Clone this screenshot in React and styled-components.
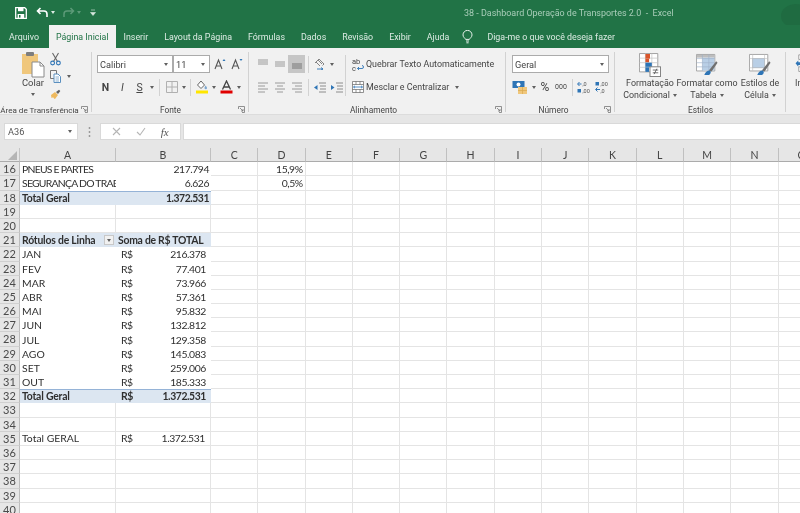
import React from 'react';
import styled, { createGlobalStyle } from 'styled-components';

const Global = createGlobalStyle`
  html, body { margin: 0; padding: 0; width: 800px; height: 513px; overflow: hidden; background: #fff; }
  #root { width: 800px; height: 513px; overflow: hidden; }
  * { box-sizing: border-box; }
`;

const UI = 'Roboto, "Noto Sans", sans-serif';
const GREEN = '#217346';

const Page = styled.div`
  width: 800px; height: 513px; overflow: hidden; display: flex; flex-direction: column;
  font-family: ${UI}; filter: blur(0.3px);
`;
const TitleBar = styled.header`
  height: 25px; flex: none; background: ${GREEN}; display: flex; align-items: center; position: relative; overflow: hidden;
`;
const Quick = styled.div`
  width: 464px; flex: none; display: flex; align-items: center; padding-left: 15px; gap: 0;
`;
const QuickSlot = styled.span`
  width: ${p => p.$w}px; margin-left: ${p => p.$ml || 0}px; display: flex; align-items: center; justify-content: center; flex: none;
`;
const TitleText = styled.div`
  font-size: 8.95px; color: #a9cdb9; white-space: pre; letter-spacing: 0;
`;
const Backdrop = styled.svg`
  position: absolute; right: 0; top: 0;
`;
const TabBar = styled.nav`
  height: 23px; flex: none; background: ${GREEN}; display: flex; align-items: stretch; padding-left: 1px;
`;
const Tab = styled.div`
  padding: 0 8px; margin-left: ${p => p.$ml || 0}px; font-size: 8.85px; color: #dcebe3; display: flex; align-items: center; white-space: nowrap;
  ${p => p.$active ? `background:#f1f1f1;color:${GREEN};padding:0 7px;` : ''}
`;
const TellMe = styled.div`
  margin-left: 5px; display: flex; align-items: center; gap: 14px; color: #dcebe3; font-size: 8.85px; white-space: nowrap;
`;
const Ribbon = styled.section`
  height: 67px; flex: none; background: #f1f1f1; display: flex; border-bottom: 1px solid #dcdcdc;
`;
const Group = styled.div`
  width: ${p => p.$w}px; flex: none; display: flex; flex-direction: column; position: relative;
  &::after { content: ''; position: absolute; right: 0; top: 4px; bottom: 2px; width: 1px; background: #d2d2d2; }
  ${p => p.$open ? '&::after{display:none;}' : ''}
`;
const GroupBody = styled.div`
  height: 58px; flex: none; display: flex; padding-left: ${p => p.$pl || 0}px; padding-top: ${p => p.$pt ?? 7}px;
`;
const GroupLabel = styled.div`
  font-size: ${p => p.$fs || 8.4}px; line-height: 8px; color: #444; text-align: center; white-space: nowrap; padding-right: ${p => p.$pr || 0}px;
`;
const Launcher = styled.svg`
  position: absolute; right: 4px; bottom: 1px;
`;
const PasteCol = styled.div`
  width: 28px; display: flex; flex-direction: column; align-items: center; margin-top: -4px; font-size: 9.4px; color: #444;
`;
const PasteText = styled.span` line-height: 10px; `;
const SmallCol = styled.div`
  display: flex; flex-direction: column; margin-left: 3px; margin-top: -5px; gap: 1px;
`;
const SmallRow = styled.div`
  height: 17px; display: flex; align-items: center; gap: 3px;
`;
const Stack = styled.div`
  display: flex; flex-direction: column; gap: 5px;
`;
const Row = styled.div`
  height: 18px; display: flex; align-items: center;
`;
const Slot = styled.span`
  width: ${p => p.$w || 17}px; height: 18px; flex: none; display: flex; align-items: center; justify-content: center;
  margin-left: ${p => p.$ml || 0}px;
  font-size: ${p => p.$fs || 11}px; color: ${p => p.$c || '#444'};
  font-weight: ${p => p.$bold ? 700 : 400}; font-style: ${p => p.$it ? 'italic' : 'normal'};
  text-decoration: ${p => p.$ul ? 'underline' : 'none'};
  background: ${p => p.$on ? '#c6c6c6' : 'transparent'};
`;
const Caret = styled.i`
  display: block; flex: none; width: 0; height: 0; margin: ${p => p.$m || '0'};
  border-left: 2.5px solid transparent; border-right: 2.5px solid transparent; border-top: 3px solid ${p => p.$c || '#606060'};
`;
const Sep = styled.span`
  width: 1px; height: 17px; background: #d2d2d2; flex: none; margin: 0 ${p => p.$m || 3}px;
`;
const Select = styled.div`
  width: ${p => p.$w}px; height: 18px; flex: none; background: #fff; border: 1px solid #ababab;
  display: flex; align-items: center; justify-content: space-between; padding: 0 4px 0 2px; font-size: 9.2px; color: #444;
`;
const SubA = styled.div`
  width: 97px; flex: none; display: flex; flex-direction: column; gap: 5px; position: relative; padding-left: 5px;
  border-right: 1px solid #d2d2d2; height: 41px;
`;
const SubB = styled.div`
  display: flex; flex-direction: column; gap: 5px; padding-left: 4px;
`;
const WideBtn = styled.div`
  height: 18px; display: flex; align-items: center; gap: 1px; font-size: 8.9px; color: #444; white-space: nowrap;
`;
const BigBtn = styled.div`
  width: ${p => p.$w}px; flex: none; display: flex; flex-direction: column; align-items: ${p => p.$start ? 'flex-start' : 'center'}; font-size: 8.9px; color: #444; white-space: nowrap;
`;
const BigIcon = styled.div` height: 26px; display:flex; align-items:flex-end; `;
const BigLine = styled.div` line-height: 12px; display: flex; align-items: center; gap: 3px; `;

const FormulaBar = styled.div`
  height: 33px; flex: none; background: #e6e6e6; display: flex; align-items: flex-start; padding: 8px 0 0 4px;
`;
const NameBox = styled.div`
  width: 74px; height: 17px; background: #fff; border: 1px solid #d9d9d9; display: flex; align-items: center; justify-content: space-between;
  padding: 0 5px 0 3px; font-size: 9.2px; color: #555; flex: none;
`;
const Dots = styled.div`
  width: 22px; height: 17px; flex: none; display: flex; align-items: center; justify-content: center;
`;
const FxBox = styled.div`
  width: 81px; height: 17px; flex: none; background: #fff; border: 1px solid #d9d9d9; display: flex; align-items: center; justify-content: space-around; padding: 0 4px;
`;
const FxMark = styled.span`
  font-family: "Liberation Serif", serif; font-style: italic; font-size: 11px; color: #555;
`;
const FormulaInput = styled.div`
  flex: 1; height: 17px; margin-left: 2px; background: #fff; border: 1px solid #d9d9d9; border-right: 0;
`;

const Sheet = styled.div`
  display: grid; grid-template-columns: 20px 96px 95px repeat(13, 47.3px); grid-auto-rows: 14.2px;
  font-family: Lato, "Liberation Sans", sans-serif; font-size: 10.4px; color: #2f2f2f; background: #fff; flex: none; width: 820px;
`;
const Corner = styled.div`
  background: #e6e6e6; border-right: 1px solid #c4c4c4; border-bottom: 1px solid #ababab; display: flex; align-items: flex-end; justify-content: flex-end; padding: 0 2px 1px 0;
`;
const ColHead = styled.div`
  background: #e6e6e6; border-right: 1px solid #c0c0c0; border-bottom: 1px solid #ababab; text-align: center; font-size: 10.5px; line-height: 14px; color: #444;
`;
const RowHead = styled.div`
  background: #e6e6e6; border-right: 1px solid #bdbdbd; border-bottom: 1px solid #d0d0d0; text-align: center; font-size: 11px; line-height: 14px; color: #4a4a4a;
`;
const Cell = styled.div`
  display: flex; align-items: center; overflow: hidden; white-space: nowrap; min-width: 0; line-height: 14px;
  padding: 0 ${p => p.$pr ?? 2}px 0 ${p => p.$pl ?? 2}px;
  justify-content: ${p => p.$align === 'right' ? 'flex-end' : p.$align === 'between' ? 'space-between' : 'flex-start'};
  font-weight: ${p => p.$bold ? 700 : 400};
  letter-spacing: ${p => p.$ls || 0}px;
  background: ${p => p.$blue ? '#dce6f1' : '#fff'};
  border-right: ${p => p.$plain ? '0' : '1px solid #e4e4e4'};
  border-bottom: ${p => p.$plain ? '0' : '1px solid #e4e4e4'};
  ${p => p.$topLine ? 'box-shadow: inset 0 1px 0 #95b3d7;' : ''}
`;
const FilterBtn = styled.span`
  width: 10px; height: 10px; background: #f1f1f1; border: 1px solid #c8c8c8; display: flex; align-items: center; justify-content: center; flex: none;
`;

/* ---------- icons ---------- */
const Save = () => (
  <svg width="12" height="12" viewBox="0 0 12 12"><path d="M.7.7h9l1.6 1.6v9H.7z" fill="none" stroke="#fff" strokeWidth="1.3"/><rect x="3" y="1" width="5.5" height="3.2" fill="#fff"/><rect x="2.6" y="7" width="6.6" height="4" fill="#fff"/><rect x="4" y="8" width="1.5" height="2.6" fill={GREEN}/></svg>
);
const Undo = ({ c = '#fff' }) => (
  <svg width="13" height="11" viewBox="0 0 13 11"><path d="M4.5 1 1.5 4l3 3M1.8 4h6.2a3 3 0 0 1 3 3v3" fill="none" stroke={c} strokeWidth="1.6"/></svg>
);
const Redo = () => (
  <svg width="13" height="11" viewBox="0 0 13 11"><path d="M8.5 1l3 3-3 3M11.2 4H5a3 3 0 0 0-3 3v3" fill="none" stroke="#5c9a78" strokeWidth="1.5"/></svg>
);
const QuickMore = () => (
  <svg width="6" height="7" viewBox="0 0 6 7"><path d="M1 1h4M.5 3.5h5l-2.5 3z" fill="#d9e8df" stroke="#d9e8df" strokeWidth=".6"/></svg>
);
const Bulb = () => (
  <svg width="11" height="14" viewBox="0 0 11 14"><path d="M3.6 9.4C3 8 1 7.2 1 4.9a4.5 4.5 0 0 1 9 0c0 2.3-2 3.1-2.6 4.5zM4 11h3M4.4 12.8h2.2" fill="none" stroke="#e9f3ed" strokeWidth="1"/></svg>
);
const LaunchIcon = () => (
  <Launcher width="7" height="7" viewBox="0 0 7 7"><path d="M.5 3V.5H6.5V6.5H4M2 2l3 3M5 3v2H3" fill="none" stroke="#777" strokeWidth=".8"/></Launcher>
);
const PasteIcon = () => (
  <svg width="24" height="27" viewBox="0 0 24 27"><rect x="1" y="3" width="16" height="20" fill="#f0c77c"/><rect x="5" y="1" width="8" height="4" rx="1" fill="#7e7e7e"/><path d="M11 11h8l4 4v11H11z" fill="#fff" stroke="#8a8a8a"/><path d="M19 11v4h4" fill="none" stroke="#8a8a8a"/></svg>
);
const Scissors = () => (
  <svg width="11" height="14" viewBox="0 0 11 14"><path d="M2.5 1 7.5 9.5M8.5 1 3.5 9.5" stroke="#666" strokeWidth="1.1"/><circle cx="2.6" cy="11" r="1.9" fill="none" stroke="#2e75b6" strokeWidth="1.1"/><circle cx="8.4" cy="11" r="1.9" fill="none" stroke="#2e75b6" strokeWidth="1.1"/></svg>
);
const CopyIcon = () => (
  <svg width="11" height="13" viewBox="0 0 11 13"><path d="M.5.5h6v8h-6z" fill="#f4f4f4" stroke="#777"/><path d="M4 4h4l2.5 2.5V12.5H4z" fill="#fff" stroke="#5a8fbf"/><path d="M5.5 7h3.5M5.5 9h3.5M5.5 11h3.5" stroke="#5a8fbf" strokeWidth=".7"/></svg>
);
const Brush = () => (
  <svg width="11" height="11" viewBox="0 0 11 11"><path d="M1 6 5 3l3 3-3 4c-1-.3-1.5-1-1.8-1.8L1.5 9z" fill="#eeb95e"/><path d="M6 3 9 .7l1.3 1.3L8 5z" fill="#606060"/></svg>
);
const GrowA = ({ down }) => (
  <svg width="12" height="12" viewBox="0 0 12 12"><path d="M1 11 4.5 2 8 11M2.3 8h4.4" fill="none" stroke="#555" strokeWidth="1.1"/><path d={down ? 'M8.5 1l1.5 2 1.5-2z' : 'M8.5 3l1.5-2 1.5 2z'} fill="#2e75b6"/></svg>
);
const Borders = () => (
  <svg width="12" height="12" viewBox="0 0 12 12"><path d="M.5.5h11v11H.5zM6 .5v11M.5 6h11" fill="none" stroke="#b0b0b0"/></svg>
);
const Fill = () => (
  <svg width="14" height="14" viewBox="0 0 14 14"><path d="M6 1 2.5 5 6 8.500 9.500 5z" fill="#fff" stroke="#666"/><path d="M10.500 5.500c1 1.200 1.500 1.800 1.500 2.500a1.200 1.200 0 0 1-2.500 0c0-.7.500-1.300 1-2.500z" fill="#7fa8d0"/><rect x="1" y="10.500" width="12" height="3" fill="#ffe600"/></svg>
);
const FontColor = () => (
  <svg width="13" height="14" viewBox="0 0 13 14"><path d="M2.500 9.500 6.500 1l4 8.500M4 7h5" fill="none" stroke="#444" strokeWidth="1.3"/><rect x="0.500" y="10.500" width="12" height="3" fill="#e00000"/></svg>
);
const Lines = ({ ys, x = [[1, 11]], c = '#9a9a9a' }) => (
  <svg width="12" height="12" viewBox="0 0 12 12">
    {ys.map((y, i) => { const s = x[i % x.length]; return <path key={i} d={`M${s[0]} ${y}H${s[1]}`} stroke={c} strokeWidth="1"/>; })}
  </svg>
);
const Orient = () => (
  <svg width="13" height="12" viewBox="0 0 13 12"><path d="M2 5 6 1l5 5-1.500 1.500M3 4l4 4M5 2l4 4" fill="none" stroke="#777" strokeWidth=".9"/><path d="M4 11h6M8 9.500 10 11l-2 1" fill="none" stroke="#2e75b6" strokeWidth=".9"/></svg>
);
const Indent = ({ flip }) => (
  <svg width="12" height="11" viewBox="0 0 12 11"><path d="M5 1h7M6 4h6M6 7h6M5 10h7M0 1h0" stroke="#8c8c8c"/><path d={flip ? 'M0 3l3.500 2.500L0 8z' : 'M3.500 3 0 5.500 3.500 8z'} fill="#2e75b6"/></svg>
);
const WrapIcon = () => (
  <svg width="12" height="14" viewBox="0 0 12 14"><text x="0" y="6.500" fontSize="7.500" fill="#444" fontFamily="Roboto">ab</text><text x="0" y="13.500" fontSize="7.500" fill="#444" fontFamily="Roboto">c</text><path d="M5.500 11.500H10q1.500 0 1.500-1.500T10 8.500M7 10l-1.500 1.500L7 13" fill="none" stroke="#2e75b6" strokeWidth=".9"/></svg>
);
const MergeIcon = () => (
  <svg width="12" height="12" viewBox="0 0 12 12"><path d="M.5.5h11v11H.5zM.5 3.500h11M.5 8.500h11M4 .5v3M8 .5v3M4 8.500v3M8 8.500v3" fill="#fff" stroke="#666" strokeWidth=".7"/><path d="M1.500 6h9M3 4.800 1.500 6 3 7.200M9 4.800 10.500 6 9 7.200" fill="none" stroke="#2e75b6" strokeWidth=".8"/></svg>
);
const Currency = () => (
  <svg width="17" height="15" viewBox="0 0 17 15"><rect x="0.500" y="1" width="12" height="7" fill="#2e75b6"/><circle cx="6.500" cy="4.500" r="2" fill="#fff"/><rect x="6" y="7" width="9" height="7" fill="#f0c77c"/><path d="M6 10.500h9M10.500 7v7" stroke="#d9a94f" strokeWidth=".7"/></svg>
);
const Decimal = ({ flip }) => (
  <svg width="14" height="14" viewBox="0 0 14 14">
    <text x="5.500" y="6" fontSize="5.500" fill="#555" fontFamily="Roboto">{flip ? ',00' : ',0'}</text>
    <text x="5.500" y="13" fontSize="5.500" fill="#555" fontFamily="Roboto">{flip ? ',0' : ',00'}</text>
    <path d={flip ? 'M5 9.500H1M2.500 7.500l-2 2 2 2' : 'M4.500 4H1M2.500 2 .5 4l2 2'} fill="none" stroke="#2e75b6" strokeWidth="1"/>
    <rect x="0.500" y={flip ? 2 : 9} width="3.500" height="3.500" fill="#2e75b6"/>
  </svg>
);
const CondIcon = () => (
  <svg width="22" height="24" viewBox="0 0 24 26">
    <path d="M.5.500h20v20H.5z" fill="#fff" stroke="#9a9a9a"/>
    <path d="M7 .5v20M14 .5v20M.5 5.500h20M.5 10.500h20M.5 15.500h20" stroke="#c4c4c4" strokeWidth=".8"/>
    <rect x="7" y="1" width="5" height="5" fill="#d9552a"/><rect x="7" y="6" width="4" height="4" fill="#d9552a"/>
    <rect x="7" y="10.500" width="7" height="4.500" fill="#2e75b6"/><rect x="7" y="15.500" width="4" height="5" fill="#2e75b6"/>
    <rect x="12" y="15" width="11.500" height="10.500" fill="#fff" stroke="#7a7a7a"/>
    <path d="M15 18.500h6M15 21.500h6M19.500 17l-3 6" stroke="#444" strokeWidth=".8" fill="none"/>
  </svg>
);
const TableIcon = () => (
  <svg width="22" height="24" viewBox="0 0 24 26">
    <path d="M.5 1.500h20v18H.5z" fill="#fff" stroke="#a0a0a0"/>
    <rect x="1" y="2" width="19" height="3" fill="#bdbdbd"/>
    <rect x="7" y="5" width="13" height="14" fill="#b9cfe6"/>
    <path d="M7 1.500v18M14 1.500v18M.5 6h20M.5 10.500h20M.5 15h20" stroke="#9fb3c8" strokeWidth=".7"/>
    <path d="M14 19 22 9l1.500 1.500L17 20z" fill="#707070"/>
    <path d="M9 24c1-3 3-5 6-5 2 1 1 4-1 5z" fill="#2e75b6"/>
  </svg>
);
const CellStyleIcon = () => (
  <svg width="22" height="24" viewBox="0 0 24 26">
    <path d="M.5 1.500h20v18H.5z" fill="#fff" stroke="#a0a0a0"/>
    <rect x="4" y="6" width="13" height="10" fill="#b9cfe6" stroke="#8fa8c2" strokeWidth=".6"/>
    <path d="M.5 6h20M4 1.500v18M17 1.500v18M.5 16h20" stroke="#c0c0c0" strokeWidth=".7"/>
    <path d="M14 19 22 9l1.500 1.500L17 20z" fill="#707070"/>
    <path d="M9 24c1-3 3-5 6-5 2 1 1 4-1 5z" fill="#2e75b6"/>
  </svg>
);
const InsertIcon = () => (
  <svg width="14" height="24" viewBox="0 0 14 26"><path d="M3.500 2h10v5h-10zM3.500 15h10v5h-10z" fill="#fff" stroke="#9a9a9a"/><path d="M0 11 3 8v2h10v3H3v2z" fill="#2e75b6"/></svg>
);
const XMark = () => <svg width="9" height="9" viewBox="0 0 9 9"><path d="M1 1l7 7M8 1 1 8" stroke="#b5b5b5" strokeWidth="1.100"/></svg>;
const Check = () => <svg width="10" height="9" viewBox="0 0 10 9"><path d="M1 5l3 3 5-7" fill="none" stroke="#b5b5b5" strokeWidth="1.100"/></svg>;
const Grip = () => <svg width="3" height="10" viewBox="0 0 3 10"><path d="M1.500 0v2M1.500 4v2M1.500 8v2" stroke="#9a9a9a" strokeWidth="1.500"/></svg>;
const CornerMark = () => <svg width="9" height="9" viewBox="0 0 9 9"><path d="M9 0v9H0z" fill="#b5b5b5"/></svg>;

/* ---------- sheet data ---------- */
const COLS = ['A','B','C','D','E','F','G','H','I','J','K','L','M','N','O'];
const MONTHS = {
  22:['JAN','216.378'],23:['FEV','77.401'],24:['MAR','73.966'],25:['ABR','57.361'],26:['MAI','95.832'],
  27:['JUN','132.812'],28:['JUL','129.358'],29:['AGO','145.083'],30:['SET','259.006'],31:['OUT','185.333'],
};
const Money = ({ v }) => (<><span>R$</span><span>{v}</span></>);
const moneyProps = { $align: 'between', $pl: 5, $pr: 5, $ls: -0.4 };
const CAPS_LS = -0.75;
const NUM_LS = -0.45;

function rowCells(r) {
  if (r === 16 || r === 17) {
    const data = r === 16 ? ['PNEUS E PARTES','217.794'] : ['SEGURANÇA DO TRABALHO','6.626'];
    return [<Cell key="a" $plain $ls={CAPS_LS}>{data[0]}</Cell>, <Cell key="b" $plain $align="right" $ls={NUM_LS}>{data[1]}</Cell>];
  }
  if (r === 18) return [<Cell key="a" $plain $blue $bold $topLine $ls={-0.2}>Total Geral</Cell>, <Cell key="b" $plain $blue $bold $topLine $align="right" $ls={NUM_LS}>1.372.531</Cell>];
  if (r === 21) return [
    <Cell key="a" $plain $blue $bold $align="between" $ls={-0.2}>Rótulos de Linha<FilterBtn><Caret /></FilterBtn></Cell>,
    <Cell key="b" $plain $blue $bold $ls={-0.25}>Soma de R$ TOTAL</Cell>,
  ];
  if (MONTHS[r]) return [<Cell key="a" $plain>{MONTHS[r][0]}</Cell>, <Cell key="b" $plain {...moneyProps}><Money v={MONTHS[r][1]}/></Cell>];
  if (r === 32) return [<Cell key="a" $plain $blue $bold $topLine $ls={-0.2}>Total Geral</Cell>, <Cell key="b" $plain $blue $bold $topLine {...moneyProps}><Money v="1.372.531"/></Cell>];
  if (r === 35) return [<Cell key="a">Total GERAL</Cell>, <Cell key="b" {...moneyProps}><Money v="1.372.531"/></Cell>];
  return [<Cell key="a"/>, <Cell key="b"/>];
}
const PCT = { 16: '15,9%', 17: '0,5%' };
const ROWS = Array.from({ length: 25 }, (_, i) => 16 + i);

export default function App() {
  return (
    <Page>
      <Global />
      <TitleBar>
        <Quick>
          <QuickSlot $w={12}><Save /></QuickSlot>
          <QuickSlot $w={14} $ml={8}><Undo /></QuickSlot>
          <QuickSlot $w={8}><Caret $c="#dcebe3" /></QuickSlot>
          <QuickSlot $w={14} $ml={4}><Redo /></QuickSlot>
          <QuickSlot $w={8}><Caret $c="#5c9a78" /></QuickSlot>
          <QuickSlot $w={20}><QuickMore /></QuickSlot>
        </Quick>
        <TitleText>38 - Dashboard Operação de Transportes 2.0  -  Excel</TitleText>
        <Backdrop width="24" height="48" viewBox="0 0 24 48"><ellipse cx="20" cy="16" rx="15" ry="12" fill="#1f6b41"/></Backdrop>
      </TitleBar>
      <TabBar>
        <Tab>Arquivo</Tab>
        <Tab $active $ml={2}>Página Inicial</Tab>
        <Tab>Inserir</Tab>
        <Tab>Layout da Página</Tab>
        <Tab>Fórmulas</Tab>
        <Tab>Dados</Tab>
        <Tab>Revisão</Tab>
        <Tab>Exibir</Tab>
        <Tab>Ajuda</Tab>
        <TellMe><Bulb />Diga-me o que você deseja fazer</TellMe>
      </TabBar>
      <Ribbon>
        <Group $w={92}>
          <GroupBody $pl={19}>
            <PasteCol>
              <PasteIcon />
              <PasteText>Colar</PasteText>
              <Caret $m="5px 0 0" />
            </PasteCol>
            <SmallCol>
              <SmallRow><Scissors /></SmallRow>
              <SmallRow><CopyIcon /><Caret $m="0 0 0 3px" /></SmallRow>
              <SmallRow><Brush /></SmallRow>
            </SmallCol>
          </GroupBody>
          <GroupLabel $pr={13} $fs={8.1}>Área de Transferência</GroupLabel>
          <LaunchIcon />
        </Group>
        <Group $w={157}>
          <GroupBody $pl={5}>
            <Stack>
              <Row>
                <Select $w={76}>Calibri<Caret /></Select>
                <Select $w={37}>11<Caret /></Select>
                <Slot $w={17} $ml={1}><GrowA /></Slot>
                <Slot $w={17}><GrowA down /></Slot>
              </Row>
              <Row>
                <Slot $bold $fs={10.500}>N</Slot>
                <Slot $it $fs={10.500}>I</Slot>
                <Slot $ul $fs={10.500}>S</Slot>
                <Slot $w={8}><Caret /></Slot>
                <Sep />
                <Slot><Borders /></Slot>
                <Slot $w={8}><Caret /></Slot>
                <Sep $m={2} />
                <Slot><Fill /></Slot>
                <Slot $w={8}><Caret /></Slot>
                <Slot><FontColor /></Slot>
                <Slot $w={8}><Caret /></Slot>
              </Row>
            </Stack>
          </GroupBody>
          <GroupLabel>Fonte</GroupLabel>
          <LaunchIcon />
        </Group>
        <Group $w={257}>
          <GroupBody>
            <SubA>
              <Row>
                <Slot><Lines ys={[2, 4, 6]} /></Slot>
                <Slot><Lines ys={[4, 6, 8]} /></Slot>
                <Slot $on><Lines ys={[6, 8, 10]} c="#777" /></Slot>
                <Sep $m={2.500} />
                <Slot $w={17}><Orient /></Slot>
                <Slot $w={8}><Caret /></Slot>
              </Row>
              <Row>
                <Slot><Lines ys={[2, 5, 8, 11]} x={[[1, 11], [1, 8]]} /></Slot>
                <Slot><Lines ys={[2, 5, 8, 11]} x={[[1, 11], [3, 9]]} /></Slot>
                <Slot><Lines ys={[2, 5, 8, 11]} x={[[1, 11], [4, 11]]} /></Slot>
                <Sep $m={2.500} />
                <Slot><Indent /></Slot>
                <Slot><Indent flip /></Slot>
              </Row>
            </SubA>
            <SubB>
              <WideBtn><Slot $w={15}><WrapIcon /></Slot>Quebrar Texto Automaticamente</WideBtn>
              <WideBtn><Slot $w={15}><MergeIcon /></Slot>Mesclar e Centralizar<Caret $m="0 0 0 5px" /></WideBtn>
            </SubB>
          </GroupBody>
          <GroupLabel $pr={8}>Alinhamento</GroupLabel>
          <LaunchIcon />
        </Group>
        <Group $w={109}>
          <GroupBody $pl={6}>
            <Stack>
              <Row><Select $w={97}>Geral<Caret /></Select></Row>
              <Row>
                <Slot $w={17}><Currency /></Slot>
                <Slot $w={9}><Caret /></Slot>
                <Slot $w={14} $fs={12}>%</Slot>
                <Slot $w={18} $fs={7}>000</Slot>
                <Sep $m={2} />
                <Slot $w={18}><Decimal /></Slot>
                <Slot $w={18}><Decimal flip /></Slot>
              </Row>
            </Stack>
          </GroupBody>
          <GroupLabel $pr={14}>Número</GroupLabel>
          <LaunchIcon />
        </Group>
        <Group $w={171}>
          <GroupBody $pl={5} $pt={3}>
            <BigBtn $w={60}>
              <BigIcon><CondIcon /></BigIcon>
              <BigLine>Formatação</BigLine>
              <BigLine>Condicional<Caret /></BigLine>
            </BigBtn>
            <BigBtn $w={54}>
              <BigIcon><TableIcon /></BigIcon>
              <BigLine>Formatar como</BigLine>
              <BigLine>Tabela<Caret /></BigLine>
            </BigBtn>
            <BigBtn $w={52}>
              <BigIcon><CellStyleIcon /></BigIcon>
              <BigLine>Estilos de</BigLine>
              <BigLine>Célula<Caret /></BigLine>
            </BigBtn>
          </GroupBody>
          <GroupLabel>Estilos</GroupLabel>
        </Group>
        <Group $w={14} $open>
          <GroupBody $pl={9} $pt={3}>
            <BigBtn $w={20} $start>
              <BigIcon><InsertIcon /></BigIcon>
              <BigLine>Inserir</BigLine>
            </BigBtn>
          </GroupBody>
        </Group>
      </Ribbon>
      <FormulaBar>
        <NameBox>A36<Caret /></NameBox>
        <Dots><Grip /></Dots>
        <FxBox><XMark /><Check /><FxMark>fx</FxMark></FxBox>
        <FormulaInput />
      </FormulaBar>
      <Sheet>
        <Corner><CornerMark /></Corner>
        {COLS.map(c => <ColHead key={c}>{c}</ColHead>)}
        {ROWS.map(r => (
          <React.Fragment key={r}>
            <RowHead>{r}</RowHead>
            {rowCells(r)}
            {COLS.slice(2).map(c => (
              <Cell key={c} $align="right" $ls={NUM_LS}>{c === 'D' ? PCT[r] : null}</Cell>
            ))}
          </React.Fragment>
        ))}
      </Sheet>
    </Page>
  );
}
